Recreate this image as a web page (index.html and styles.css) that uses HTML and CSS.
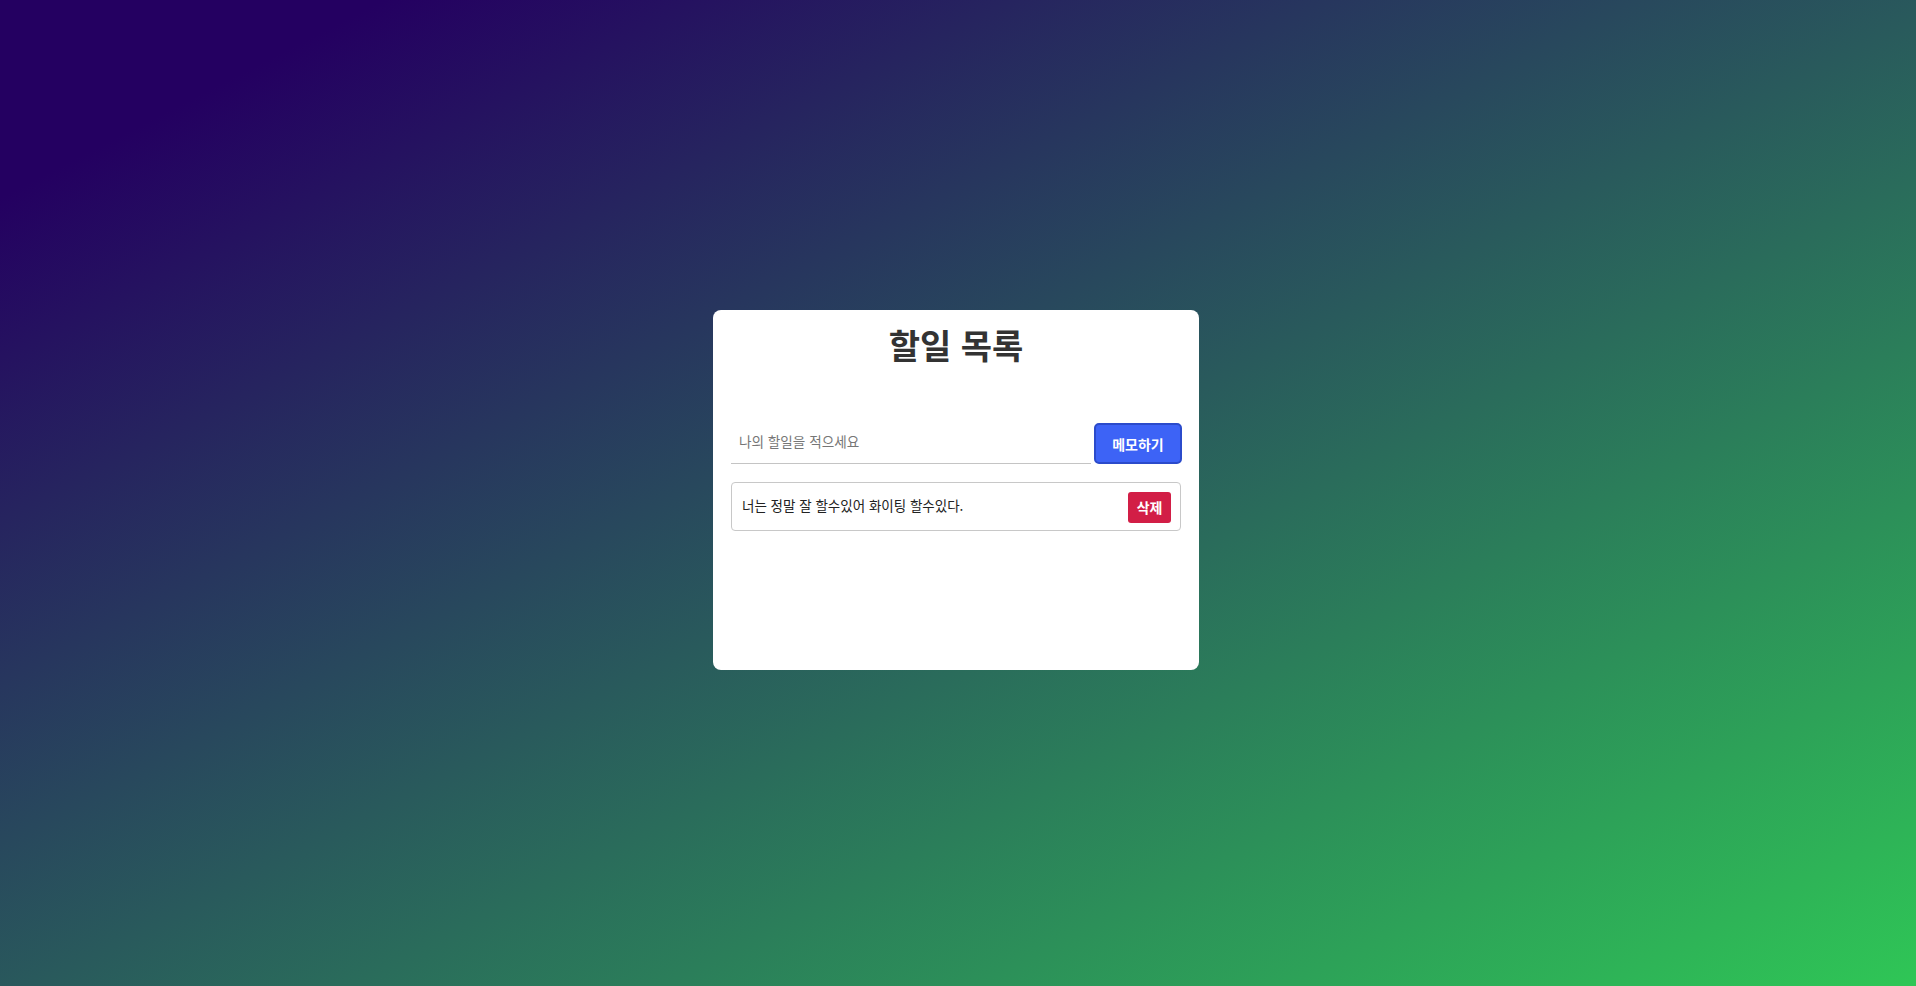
FILE: index.html
```html
<!DOCTYPE html>
<html lang="ko">
<head>
<meta charset="utf-8">
<title>할일 목록</title>
<link rel="stylesheet" href="styles.css">
</head>
<body>
  <main class="stage">
    <section class="card">
      <h1 class="title">할일 목록</h1>
      <form class="todo-form">
        <input class="todo-input" type="text" placeholder="나의 할일을 적으세요">
        <button class="add-btn" type="button">메모하기</button>
      </form>
      <ul class="todo-list">
        <li class="todo-item">
          <span class="todo-text">너는 정말 잘 할수있어 화이팅 할수있다.</span>
          <button class="del-btn" type="button">삭제</button>
        </li>
      </ul>
    </section>
  </main>
</body>
</html>
```
FILE: styles.css
```css
* { box-sizing: border-box; }
html, body { margin: 0; height: 100%; }
body {
  font-family: "Noto Sans CJK KR", "Noto Sans", sans-serif;
  background: linear-gradient(to bottom right, #240061 10%, #2fc656 100%);
}
.stage {
  height: 100vh;
  display: flex;
  align-items: center;
  justify-content: center;
  padding: 0 4px 6px 0;
}
.card {
  width: 486px;
  height: 360px;
  background: #fff;
  border-radius: 8px;
  padding: 11px 18px 18px;
}
.title {
  margin: 0 0 54px;
  text-align: center;
  font-size: 34px;
  line-height: 48px;
  font-weight: 700;
  color: #333;
}
.todo-form {
  display: flex;
  gap: 3px;
  margin: 0;
}
.todo-input {
  flex: 1;
  min-width: 0;
  border: none;
  border-bottom: 1px solid #c4c4c4;
  padding: 0 8px 4px;
  font-family: inherit;
  font-size: 13.6px;
  color: #222;
  outline: none;
  background: transparent;
}
.todo-input::placeholder { color: #767676; }
.add-btn {
  width: 88px;
  height: 41px;
  background: #3d63f6;
  border: 2px solid #2b4bcb;
  border-radius: 5px;
  color: #fff;
  font-family: inherit;
  font-size: 14px;
  font-weight: 700;
  padding: 0;
  margin-right: -1px;
}
.todo-list {
  list-style: none;
  margin: 18px 0 0;
  padding: 0;
}
.todo-item {
  display: flex;
  align-items: center;
  justify-content: space-between;
  border: 1px solid #c8c8c8;
  border-radius: 4px;
  padding: 9px 9px 7px 10px;
}
.todo-text {
  font-size: 13.5px;
  color: #222;
  padding-bottom: 6px;
}
.del-btn {
  background: #d21e46;
  border: none;
  border-radius: 3px;
  color: #fff;
  font-family: inherit;
  font-size: 14px;
  font-weight: 700;
  line-height: 21px;
  padding: 5px 8.5px;
}
```
